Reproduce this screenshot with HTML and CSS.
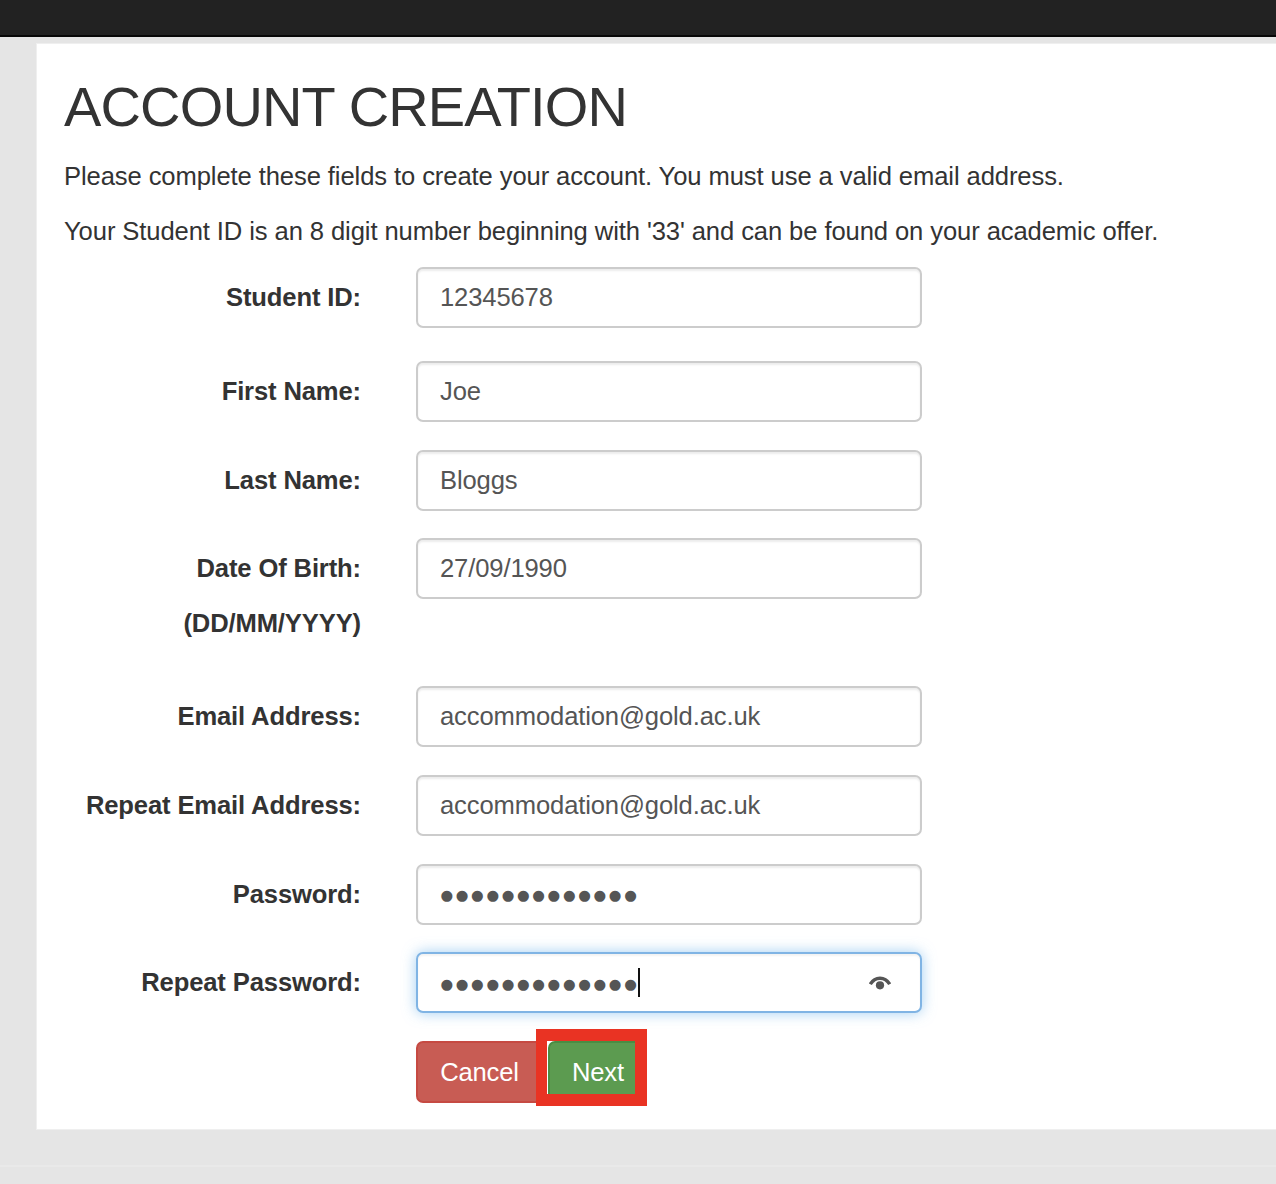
FILE: index.html
```html
<!DOCTYPE html>
<html lang="en">
<head>
    <meta charset="UTF-8">
    <meta name="viewport" content="width=device-width, initial-scale=1.0">
    <title>Account Creation</title>
    <link rel="stylesheet" href="styles.css">
</head>
<body>
    <header class="navbar"></header>

    <main class="panel">
        <h1>ACCOUNT CREATION</h1>
        <p class="intro">Please complete these fields to create your account. You must use a valid email address.</p>
        <p class="intro">Your Student ID is an 8 digit number beginning with '33' and can be found on your academic offer.</p>

        <form class="form">
            <div class="form-group spaced">
                <label for="studentId">Student ID:</label>
                <input class="form-control" id="studentId" type="text" value="12345678">
            </div>
            <div class="form-group">
                <label for="firstName">First Name:</label>
                <input class="form-control" id="firstName" type="text" value="Joe">
            </div>
            <div class="form-group">
                <label for="lastName">Last Name:</label>
                <input class="form-control" id="lastName" type="text" value="Bloggs">
            </div>
            <div class="form-group spaced">
                <label for="dob">Date Of Birth:<span class="hint">(DD/MM/YYYY)</span></label>
                <input class="form-control" id="dob" type="text" value="27/09/1990">
            </div>
            <div class="form-group">
                <label for="email">Email Address:</label>
                <input class="form-control" id="email" type="text" value="accommodation@gold.ac.uk">
            </div>
            <div class="form-group">
                <label for="email2">Repeat Email Address:</label>
                <input class="form-control" id="email2" type="text" value="accommodation@gold.ac.uk">
            </div>
            <div class="form-group">
                <label>Password:</label>
                <div class="form-control">
                    <span class="dots">●●●●●●●●●●●●●</span>
                </div>
            </div>
            <div class="form-group">
                <label>Repeat Password:</label>
                <div class="form-control focused">
                    <span class="dots">●●●●●●●●●●●●●</span>
                    <span class="caret"></span>
                    <svg class="eye" width="22" height="14" viewBox="0 0 22 14">
                        <path d="M1.3 8.2C6 0.2 16 0.2 20.7 8.2" fill="none" stroke="#555" stroke-width="3.4"/>
                        <circle cx="11" cy="9.3" r="4.1" fill="#555"/>
                    </svg>
                </div>
            </div>
            <div class="actions">
                <button class="btn btn-danger" type="button">Cancel</button>
                <div class="next-wrap">
                    <button class="btn btn-success" type="button">Next</button>
                    <span class="highlight"></span>
                </div>
            </div>
        </form>
    </main>

    <footer class="footer"></footer>
</body>
</html>
```
FILE: styles.css
```css
* {
    margin: 0;
    padding: 0;
    box-sizing: border-box;
}

body {
    height: 1184px;
    overflow: hidden;
    font-family: "Liberation Sans", Arial, sans-serif;
    font-size: 25.6px;
    line-height: 36px;
    color: #333;
    background-color: #e5e5e5;
}

.navbar {
    height: 37px;
    background-color: #222;
    border-bottom: 2px solid #080808;
}

.panel {
    height: 1087px;
    margin: 6px 0 0 36px;
    padding: 32px 0 0 27px;
    background-color: #fff;
    border: 1px solid #efefef;
    border-right: 0;
}

h1 {
    margin-bottom: 21px;
    font-size: 56px;
    font-weight: normal;
    line-height: 61px;
    letter-spacing: -0.85px;
    white-space: nowrap;
}

.intro {
    margin-bottom: 18.5px;
    letter-spacing: -0.1px;
    white-space: nowrap;
}

.form {
    width: 858px;
}

.form-group {
    display: flex;
    gap: 55px;
    margin-bottom: 27.7px;
}

.form-group.spaced {
    margin-bottom: 33px;
}

label {
    width: 297px;
    padding-top: 12px;
    font-weight: bold;
    text-align: right;
    letter-spacing: -0.13px;
    white-space: nowrap;
}

.hint {
    display: block;
    margin-top: 19px;
    margin-bottom: 12px;
}

.form-control {
    display: flex;
    align-items: center;
    width: 506px;
    height: 61px;
    padding: 0 22px;
    font: inherit;
    letter-spacing: -0.13px;
    color: #555;
    background-color: #fff;
    border: 2px solid #ccc;
    border-radius: 7px;
    box-shadow: inset 0 2px 2px rgba(0, 0, 0, 0.075);
    outline: none;
}

.form-control.focused {
    border-color: #80b4e4;
    box-shadow: inset 0 2px 2px rgba(0, 0, 0, 0.05), 0 0 14px rgba(102, 175, 233, 0.6);
}

.dots {
    padding-top: 2px;
    padding-left: 0.5px;
    font-family: "DejaVu Sans", sans-serif;
    font-size: 14.5px;
    letter-spacing: 2.65px;
}

.caret {
    width: 2px;
    height: 29px;
    margin-left: -1px;
    background-color: #111;
}

.eye {
    margin-left: auto;
    margin-right: 7px;
}

.actions {
    display: flex;
    gap: 5px;
    padding-left: 352px;
}

.btn {
    height: 62px;
    padding: 0 22px;
    font: inherit;
    letter-spacing: -0.2px;
    color: #fff;
    border: 2px solid;
    border-radius: 7px;
}

.btn-danger {
    width: 127px;
    background-color: #c85c54;
    border-color: #c64a42;
}

.btn-success {
    width: 99px;
    background-color: #5c9b50;
    border-color: #4b8c43;
}

.next-wrap {
    position: relative;
}

/* Red frame drawn over the Next button */
.highlight {
    position: absolute;
    top: -12px;
    left: -12px;
    width: 111px;
    height: 77px;
    border: 12px solid #e93323;
    border-left-width: 11px;
}

.footer {
    height: 19px;
    margin-top: 35px;
    border-top: 2px solid #e9e9e9;
}
```
